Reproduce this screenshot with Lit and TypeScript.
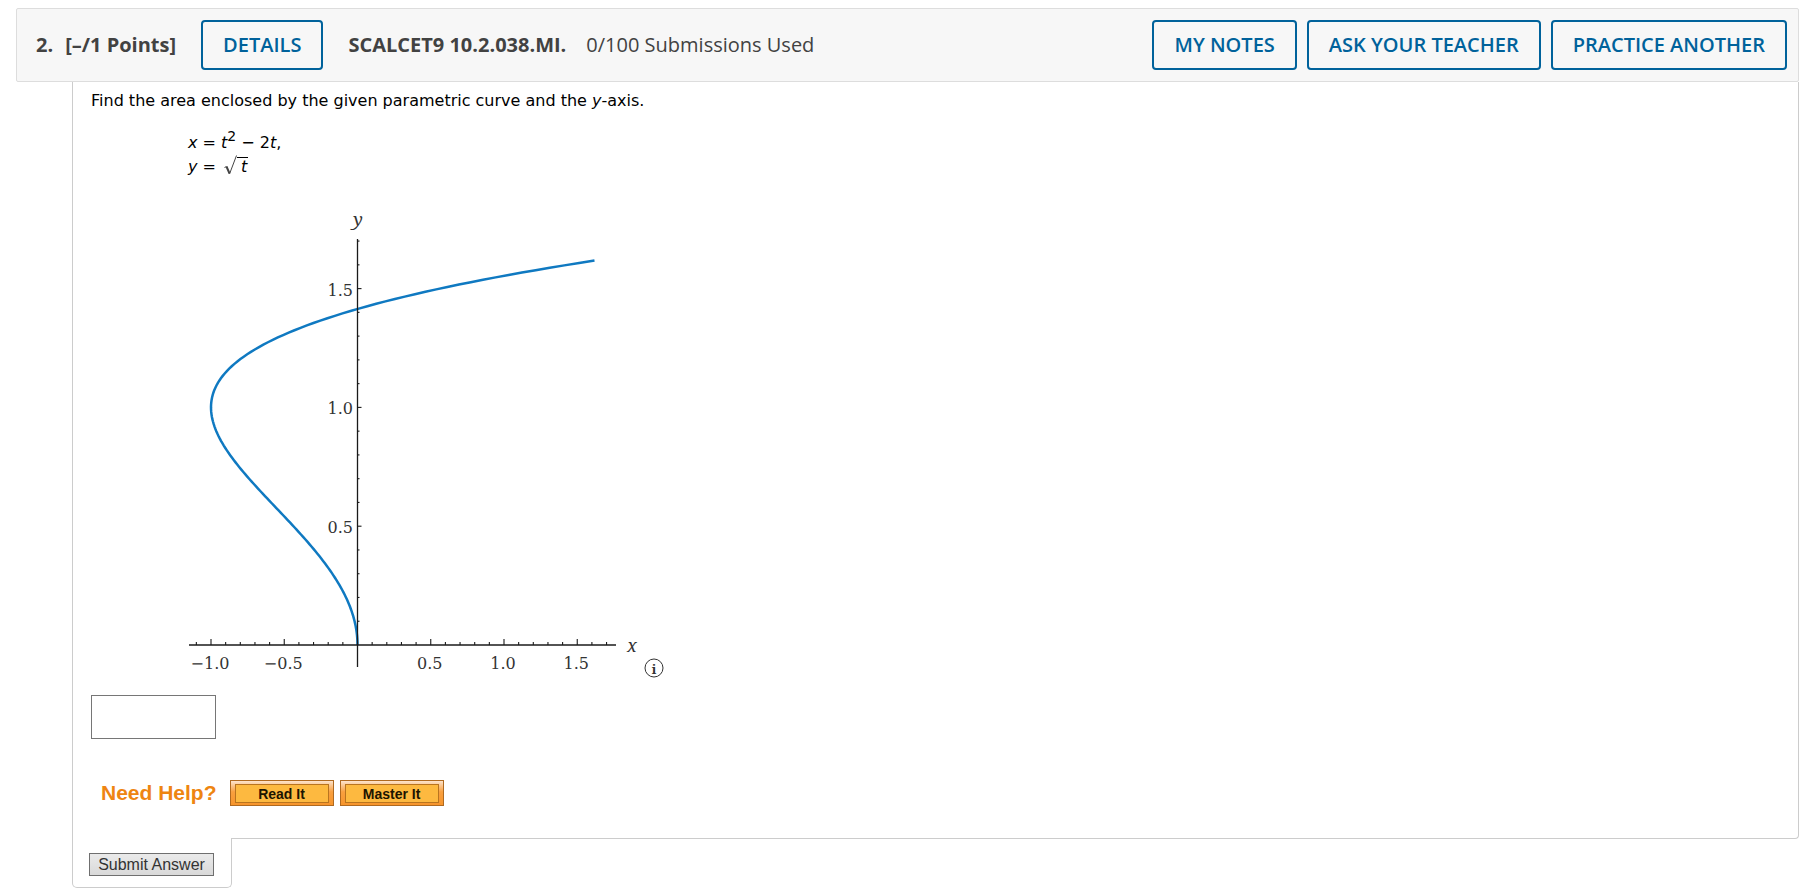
import { LitElement, html, svg, css } from "lit";
import { customElement } from "lit/decorators.js";

const ORIGIN_X = 169.5;
const ORIGIN_Y = 439;
const UNIT_X = 146.5;
const UNIT_Y = 237.6;

const toX = (value: number) => ORIGIN_X + value * UNIT_X;
const toY = (value: number) => ORIGIN_Y - value * UNIT_Y;

// Samples x = t^2 - 2t, y = sqrt(t), stepping evenly in y for a smooth curve.
function curvePoints(): string {
  const last = 1.618;
  const steps = 160;
  const points: string[] = [];
  for (let i = 0; i <= steps; i++) {
    const y = (last * i) / steps;
    const t = y * y;
    points.push(`${toX(t * t - 2 * t).toFixed(2)},${toY(y).toFixed(2)}`);
  }
  return points.join(" ");
}

@customElement("parametric-graph")
export class ParametricGraph extends LitElement {
  static styles = css`
    :host {
      display: flex;
      align-items: flex-end;
    }
    .plot {
      display: block;
      width: 456px;
      height: 476px;
    }
    .axis {
      stroke: #1a1a1a;
      stroke-width: 1.3;
    }
    .tick {
      stroke: #1a1a1a;
      stroke-width: 1.1;
    }
    .curve {
      fill: none;
      stroke: #0f79c1;
      stroke-width: 2.5;
    }
    .label {
      font: 16px "DejaVu Serif", serif;
      fill: #333;
    }
    .name {
      font: italic 18px "Noto Serif", "Droid Serif", "Liberation Serif", serif;
      fill: #333;
    }
    .end {
      text-anchor: end;
    }
    .middle {
      text-anchor: middle;
    }
    .info {
      width: 20px;
      height: 20px;
      margin-bottom: 4px;
      padding: 0;
      border: 0;
      background: none;
      cursor: pointer;
    }
    .info svg {
      display: block;
    }
    .ring {
      fill: none;
      stroke: #333;
    }
    .letter {
      font: bold 13px "Noto Serif", "DejaVu Serif", serif;
      fill: #333;
      text-anchor: middle;
    }
  `;

  private xTicks() {
    const ticks = [];
    for (let i = -11; i <= 17; i++) {
      if (i === 0) continue;
      const x = toX(i / 10);
      ticks.push(
        svg`<line class="tick" x1=${x} x2=${x} y1=${ORIGIN_Y} y2=${ORIGIN_Y - (i % 5 === 0 ? 6 : 3)} />`
      );
    }
    return ticks;
  }

  private yTicks() {
    const ticks = [];
    for (let i = 1; i <= 17; i++) {
      const y = toY(i / 10);
      ticks.push(
        svg`<line class="tick" x1=${ORIGIN_X} x2=${ORIGIN_X + (i % 5 === 0 ? 4 : 2)} y1=${y} y2=${y} />`
      );
    }
    return ticks;
  }

  render() {
    return html`
      <svg class="plot" viewBox="0 0 456 476" role="img" aria-label="Graph of the parametric curve">
        <polyline class="curve" points=${curvePoints()} />
        <line class="axis" x1="1" x2="428" y1=${ORIGIN_Y} y2=${ORIGIN_Y} />
        <line class="axis" x1=${ORIGIN_X} x2=${ORIGIN_X} y1="33" y2="461" />
        ${this.xTicks()} ${this.yTicks()}
        ${["−1.0", "−0.5", "0.5", "1.0", "1.5"].map(
          (text) => svg`<text class="label middle" x=${toX(Number(text.replace("−", "-"))) - 1} y="463">${text}</text>`
        )}
        ${["0.5", "1.0", "1.5"].map(
          (text) => svg`<text class="label end" x="165" y=${toY(Number(text)) + 7}>${text}</text>`
        )}
        <text class="name middle" x="170" y="20">y</text>
        <text class="name middle" x="444" y="446">x</text>
      </svg>
      <button class="info" type="button" aria-label="Graph description">
        <svg width="20" height="20" viewBox="0 0 20 20">
          <circle class="ring" cx="10" cy="10" r="9" />
          <text class="letter" x="10" y="16">i</text>
        </svg>
      </button>
    `;
  }
}

@customElement("app-root")
export class AppRoot extends LitElement {
  static styles = css`
    :host {
      display: block;
      box-sizing: border-box;
      padding: 8px 2px 0 16px;
      background: #fff;
    }
    * {
      box-sizing: border-box;
    }
    .header {
      display: flex;
      align-items: center;
      padding: 11px 11px 11px 19px;
      border: 1px solid #ddd;
      border-radius: 2px;
      background: #f7f7f7;
      color: #424242;
      font: 20px/26px "Open Sans", sans-serif;
    }
    .heading {
      display: flex;
      gap: 12px;
      margin: 0 25px 0 0;
      font: inherit;
      font-weight: 700;
    }
    .source {
      margin: 0 20px 0 25px;
      font-weight: 700;
    }
    .actions {
      display: flex;
      gap: 10px;
      margin-left: auto;
    }
    .outline {
      padding: 10px 20px;
      border: 2px solid #00629b;
      border-radius: 4px;
      background: none;
      color: #00629b;
      font: 600 20px/26px "Open Sans", sans-serif;
      cursor: pointer;
    }
    .content {
      margin-left: 56px;
      padding: 7px 18px 32px;
      border: 1px solid #ccc;
      border-top: 0;
      border-radius: 0 0 4px 0;
      color: #000;
      font: 16px/24px Verdana, "DejaVu Sans", sans-serif;
    }
    .prompt {
      margin: 0;
    }
    .equations {
      margin: 18px 0 0 97px;
    }
    .equation {
      height: 24px;
      white-space: pre;
    }
    sup {
      font-size: 14px;
      line-height: 0;
      vertical-align: 7px;
    }
    .root {
      width: 13px;
      height: 20px;
      margin-left: 3px;
      vertical-align: -3px;
    }
    .radical {
      fill: none;
      stroke: #444;
    }
    .radicand {
      display: inline-block;
      height: 17px;
      padding: 0 1px 0 4px;
      border-top: 1px solid #000;
      line-height: 18px;
    }
    .graph {
      margin: 27px 0 0 97px;
    }
    .answer {
      display: block;
      width: 125px;
      height: 44px;
      margin-top: 13px;
      padding: 4px 8px;
      border: 1px solid #767676;
      border-radius: 0;
      background: #fff;
      font: inherit;
    }
    .help {
      display: flex;
      align-items: center;
      gap: 6px;
      margin: 41px 0 0 10px;
      font-family: Arial, "Liberation Sans", sans-serif;
    }
    .help-title {
      margin-right: 7px;
      color: #ee8511;
      font-size: 21px;
      font-weight: 700;
      line-height: 24px;
    }
    .help-button {
      height: 26px;
      padding: 3px 4px;
      border: 1px solid #b06a20;
      background: linear-gradient(#fde3cb, #f9a03f 45%, #f7952c);
      cursor: pointer;
    }
    .help-face {
      display: block;
      min-width: 94px;
      padding: 1px 12px 0;
      border: 1px solid #b9741f;
      background: #fdb940;
      color: #1c1400;
      font: 700 14px/16px Arial, "Liberation Sans", sans-serif;
    }
    .tab {
      width: 160px;
      margin: -1px 0 0 56px;
      padding: 15px 16px 11px;
      border: 1px solid #ccc;
      border-top: 0;
      border-radius: 0 0 5px 5px;
      background: #fff;
    }
    .submit {
      display: block;
      width: 125px;
      height: 23px;
      padding: 0;
      border: 1px solid #6f6f6f;
      background: linear-gradient(#eaeaea, #d9d9d9);
      color: #333;
      font: 16px/20px Arial, "Liberation Sans", sans-serif;
      cursor: pointer;
    }
  `;

  render() {
    return html`
      <header class="header">
        <h2 class="heading"><span>2.</span><span>[–/1 Points]</span></h2>
        <button class="outline" type="button">DETAILS</button>
        <span class="source">SCALCET9 10.2.038.MI.</span>
        <span>0/100 Submissions Used</span>
        <div class="actions">
          <button class="outline" type="button">MY NOTES</button>
          <button class="outline" type="button">ASK YOUR TEACHER</button>
          <button class="outline" type="button">PRACTICE ANOTHER</button>
        </div>
      </header>
      <main class="content">
        <p class="prompt">Find the area enclosed by the given parametric curve and the <i>y</i>-axis.</p>
        <div class="equations">
          <div class="equation"><i>x</i> = <i>t</i><sup>2</sup> − 2<i>t</i>,</div>
          <div class="equation"><i>y</i> = <svg class="root" viewBox="0 0 13 20"><path class="radical" d="M0.5 12.5 L2.5 11.5" stroke-width="1" /><path class="radical" d="M2.5 11.5 L5.5 18.5" stroke-width="2" /><path class="radical" d="M5.5 19 L12.5 0.5" stroke-width="1" /></svg><span class="radicand"><i>t</i></span></div>
        </div>
        <parametric-graph class="graph"></parametric-graph>
        <input class="answer" type="text" aria-label="Answer" />
        <div class="help">
          <span class="help-title">Need Help?</span>
          <button class="help-button" type="button"><span class="help-face">Read It</span></button>
          <button class="help-button" type="button"><span class="help-face">Master It</span></button>
        </div>
      </main>
      <div class="tab">
        <button class="submit" type="button">Submit Answer</button>
      </div>
    `;
  }
}
